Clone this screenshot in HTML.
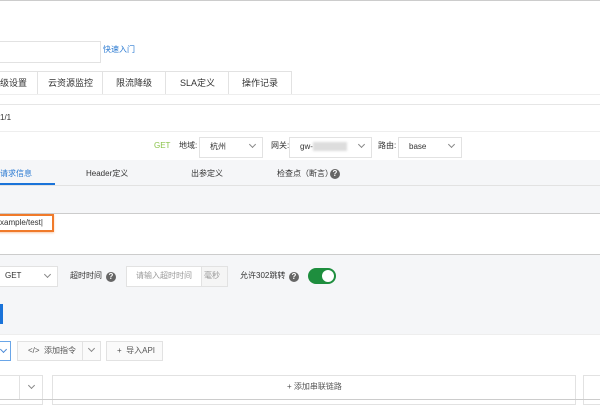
<!DOCTYPE html>
<html><head><meta charset="utf-8"><style>
*{margin:0;padding:0;box-sizing:border-box}
body{width:600px;height:400px;overflow:hidden;background:#fff;font-family:"Liberation Sans","Noto Sans CJK SC",sans-serif;font-size:8px;color:#333;position:relative}
.a{position:absolute}
.box{position:absolute;border:1px solid #e2e2e2;background:#fff}
.t{position:absolute;white-space:nowrap;line-height:10px}
.hl{position:absolute;left:0;width:600px;height:1px;background:#e0e0e0}
.chev{position:absolute;width:5px;height:5px;border-right:1px solid #888;border-bottom:1px solid #888;transform:rotate(45deg)}
.q{position:absolute;width:10px;height:10px;border-radius:50%;background:#666;color:#fff;font-size:8px;font-weight:bold;text-align:center;line-height:10px}
</style></head><body>
<div class="hl" style="top:0;background:#ccc"></div>
<div class="box" style="left:-2px;top:41px;width:103px;height:22px"></div>
<div class="t" style="left:103px;top:45px;color:#2a7ad2">快速入门</div>

<div class="box" style="left:-2px;top:71px;width:294px;height:24px"></div>
<div class="a" style="left:37px;top:71px;width:1px;height:24px;background:#e2e2e2"></div>
<div class="a" style="left:102px;top:71px;width:1px;height:24px;background:#e2e2e2"></div>
<div class="a" style="left:165px;top:71px;width:1px;height:24px;background:#e2e2e2"></div>
<div class="a" style="left:228px;top:71px;width:1px;height:24px;background:#e2e2e2"></div>
<div class="t" style="left:0;top:78px;font-size:9px">级设置</div>
<div class="t" style="left:48px;top:78px;font-size:9px">云资源监控</div>
<div class="t" style="left:116px;top:78px;font-size:9px">限流降级</div>
<div class="t" style="left:180px;top:78px;font-size:9px">SLA定义</div>
<div class="t" style="left:242px;top:78px;font-size:9px">操作记录</div>
<div class="hl" style="top:94px;background:#eee"></div>
<div class="hl" style="top:104px;background:#e6e6e6"></div>
<div class="t" style="left:0;top:113px">1/1</div>
<div class="hl" style="top:131px;background:#eee"></div>

<div class="t" style="left:154px;top:141px;color:#8bc34a">GET</div>
<div class="t" style="left:179px;top:141px">地域:</div>
<div class="box" style="left:199px;top:137px;width:64px;height:21px"></div>
<div class="t" style="left:210px;top:142px">杭州</div>
<div class="chev" style="left:250px;top:142px"></div>
<div class="t" style="left:271px;top:141px">网关:</div>
<div class="box" style="left:289px;top:137px;width:83px;height:21px"></div>
<div class="t" style="left:300px;top:142px">gw-</div>
<div class="a" style="left:313px;top:142px;width:34px;height:9px;background:#ddd;filter:blur(1px)"></div>
<div class="chev" style="left:359px;top:142px"></div>
<div class="t" style="left:378px;top:141px">路由:</div>
<div class="box" style="left:398px;top:137px;width:64px;height:21px"></div>
<div class="t" style="left:409px;top:142px">base</div>
<div class="chev" style="left:449px;top:142px"></div>

<div class="a" style="left:0;top:160px;width:600px;height:53px;background:#f5f6f8"></div>
<div class="t" style="left:0;top:169px;color:#2a7ad2">请求信息</div>
<div class="a" style="left:0;top:183px;width:55px;height:2px;background:#1a73d9"></div>
<div class="t" style="left:86px;top:169px">Header定义</div>
<div class="t" style="left:191px;top:169px">出参定义</div>
<div class="t" style="left:277px;top:169px">检查点（断言）</div>
<div class="q" style="left:330px;top:169px">?</div>
<div class="hl" style="top:185px;background:#e2e2e2"></div>
<div class="hl" style="top:213px;background:#ccc"></div>
<div class="a" style="left:-2px;top:214px;width:56px;height:18px;border:2px solid #f07a2a;box-shadow:0 1px 2px rgba(240,120,40,.4)"></div>
<div class="t" style="left:0;top:218px">xample/test|</div>
<div class="hl" style="top:254px;background:#ccc"></div>

<div class="a" style="left:0;top:255px;width:600px;height:79px;background:#f5f6f8"></div>
<div class="box" style="left:-2px;top:266px;width:60px;height:21px"></div>
<div class="t" style="left:5px;top:271px">GET</div>
<div class="chev" style="left:45px;top:272px"></div>
<div class="t" style="left:70px;top:271px">超时时间</div>
<div class="q" style="left:106px;top:272px">?</div>
<div class="box" style="left:126px;top:266px;width:102px;height:21px"></div>
<div class="a" style="left:201px;top:267px;width:26px;height:19px;background:#f5f5f5;border-left:1px solid #e2e2e2"></div>
<div class="t" style="left:136px;top:271px;color:#999">请输入超时时间</div>
<div class="t" style="left:204px;top:271px;color:#999">毫秒</div>
<div class="t" style="left:240px;top:271px">允许302跳转</div>
<div class="q" style="left:289px;top:272px">?</div>
<div class="a" style="left:308px;top:268px;width:28px;height:16px;border-radius:8px;background:#1e8e3e"></div>
<div class="a" style="left:322px;top:270px;width:12px;height:12px;border-radius:50%;background:#fff"></div>
<div class="a" style="left:0;top:304px;width:3px;height:20px;background:#1a73d9"></div>
<div class="hl" style="top:334px;background:#eee"></div>

<div class="box" style="left:-2px;top:341px;width:13px;height:20px;border-color:#6aa6e8"></div>
<div class="chev" style="left:1px;top:347px;border-color:#4a8ad8"></div>
<div class="box" style="left:17px;top:341px;width:84px;height:20px;background:#fafafa"></div>
<div class="a" style="left:82px;top:341px;width:1px;height:20px;background:#e2e2e2"></div>
<div class="t" style="left:28px;top:346px;color:#555">&lt;/&gt;&nbsp; 添加指令</div>
<div class="chev" style="left:89px;top:346px"></div>
<div class="box" style="left:106px;top:341px;width:57px;height:20px;background:#fafafa"></div>
<div class="t" style="left:117px;top:346px;color:#555">+ &nbsp;导入API</div>

<div class="box" style="left:-2px;top:375px;width:45px;height:30px"></div>
<div class="a" style="left:19px;top:375px;width:1px;height:25px;background:#e2e2e2"></div>
<div class="chev" style="left:29px;top:383px"></div>
<div class="box" style="left:52px;top:375px;width:524px;height:30px"></div>
<div class="t" style="left:287px;top:382px;color:#555">+ 添加串联链路</div>
<div class="box" style="left:583px;top:375px;width:30px;height:30px"></div>
<div class="hl" style="top:399px;background:#ccc"></div>
</body></html>
